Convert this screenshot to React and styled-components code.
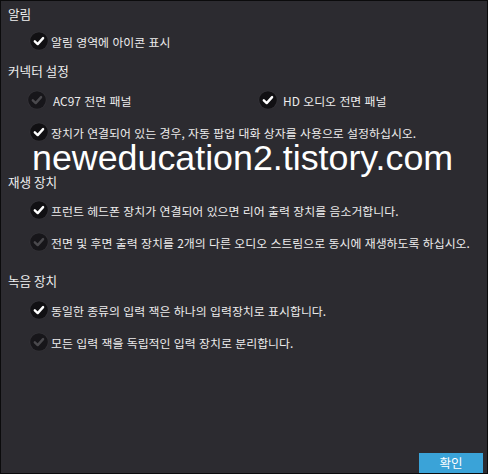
import React from "react";
import styled, { createGlobalStyle } from "styled-components";

const Global = createGlobalStyle`
  html, body { margin: 0; padding: 0; background: #2c2b30; }
  * { box-sizing: border-box; }
`;

const Window = styled.div`
  position: relative;
  width: 488px;
  height: 474px;
  border: 1px solid #0b0b0c;
  background: #2c2b30;
  display: flex;
  flex-direction: column;
  padding-top: 2px;
  font-family: "Noto Sans CJK KR", "Noto Sans", sans-serif;
  color: #ececec;
  overflow: hidden;
`;

const Section = styled.section`
  margin-top: ${(p) => p.$mt || 0}px;
  display: flex;
  flex-direction: column;
`;

const Heading = styled.div`
  height: 20px;
  display: flex;
  align-items: center;
  padding-left: 7px;
  font-size: 12.6px;
  color: #f0f0f0;
`;

const List = styled.div`
  padding-top: ${(p) => p.$pt || 0}px;
  display: flex;
  flex-direction: column;
`;

const Item = styled.div`
  height: 32px;
  display: flex;
  align-items: center;
  padding-left: 28px;
  gap: 2px;
  font-size: 11.9px;
  word-spacing: 0.7px;
  color: #ececec;
  white-space: nowrap;
`;

const Pair = styled.div`
  height: 32px;
  display: grid;
  grid-template-columns: 231px 1fr;
  padding-left: 26px;
  align-items: center;
`;

const PairItem = styled.div`
  display: flex;
  align-items: center;
  gap: ${(p) => p.$gap || 6}px;
  font-size: 11.9px;
  word-spacing: 0.7px;
  color: #ececec;
  white-space: nowrap;
`;

const Footer = styled.div`
  margin-top: auto;
  display: flex;
  justify-content: flex-end;
  padding: 0 4px 0 0;
`;

const Button = styled.button`
  width: 64px;
  height: 20px;
  border: none;
  background: #3aa3d8;
  color: #ffffff;
  font-family: "Noto Sans CJK KR", sans-serif;
  font-size: 12.5px;
  padding: 0;
  line-height: 20px;
`;

const Watermark = styled.div`
  position: absolute;
  left: 31px;
  top: 140px;
  font-family: "Liberation Sans", Arial, sans-serif;
  font-size: 35.8px;
  line-height: 1;
  color: #ffffff;
  white-space: nowrap;
  pointer-events: none;
`;

const Box = styled.svg`
  flex: none;
  display: block;
`;

function Check({ on = true }) {
  return (
    <Box width="20" height="20" viewBox="0 0 20 20">
      <circle cx="10" cy="10" r="9.6" fill="#3a393e" opacity="0.55" />
      <circle cx="10" cy="10" r="8.8" fill={on ? "#111013" : "#17161a"} />
      <path
        d="M5.8 10.3 L8.7 13.1 L14.1 7.1"
        fill="none"
        stroke={on ? "#ffffff" : "#4a494d"}
        strokeWidth="2.4"
        strokeLinecap="round"
        strokeLinejoin="round"
      />
    </Box>
  );
}

export default function App() {
  return (
    <>
      <Global />
      <Window>
        <Section>
          <Heading>알림</Heading>
          <List $pt={2}>
            <Item><Check />알림 영역에 아이콘 표시</Item>
          </List>
        </Section>
        <Section $mt={3}>
          <Heading>커넥터 설정</Heading>
          <List $pt={4}>
            <Pair>
              <PairItem $gap={6}><Check on={false} />AC97 전면 패널</PairItem>
              <PairItem $gap={5}><Check />HD 오디오 전면 패널</PairItem>
            </Pair>
            <Item><Check />장치가 연결되어 있는 경우, 자동 팝업 대화 상자를 사용으로 설정하십시오.</Item>
          </List>
        </Section>
        <Section $mt={23}>
          <Heading>재생 장치</Heading>
          <List $pt={3}>
            <Item><Check />프런트 헤드폰 장치가 연결되어 있으면 리어 출력 장치를 음소거합니다.</Item>
            <Item><Check on={false} />전면 및 후면 출력 장치를 2개의 다른 오디오 스트림으로 동시에 재생하도록 하십시오.</Item>
          </List>
        </Section>
        <Section $mt={12}>
          <Heading>녹음 장치</Heading>
          <List $pt={4}>
            <Item><Check />동일한 종류의 입력 잭은 하나의 입력장치로 표시합니다.</Item>
            <Item><Check on={false} />모든 입력 잭을 독립적인 입력 장치로 분리합니다.</Item>
          </List>
        </Section>
        <Footer>
          <Button>확인</Button>
        </Footer>
        <Watermark>neweducation2.tistory.com</Watermark>
      </Window>
    </>
  );
}
